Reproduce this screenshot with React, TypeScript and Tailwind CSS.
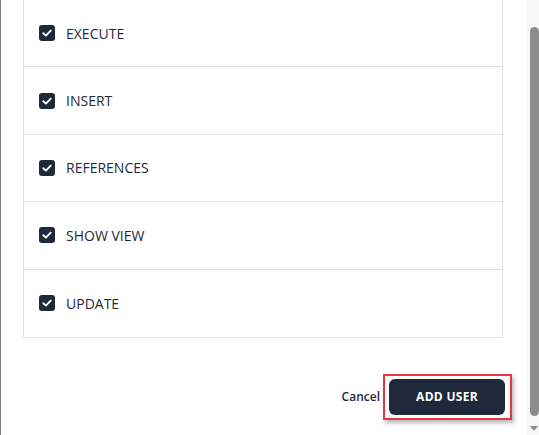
import React from "react";

const items = ["EXECUTE", "INSERT", "REFERENCES", "SHOW VIEW", "UPDATE"];

function Check() {
  return (
    <div className="w-4 h-4 rounded-[3px] bg-[#1e293b] flex items-center justify-center shrink-0">
      <svg width="12" height="12" viewBox="0 0 12 12" fill="none">
        <polyline points="2.3,6.2 4.9,8.6 9.7,3.6" stroke="#ffffff" strokeWidth="1.9" strokeLinecap="round" strokeLinejoin="round" />
      </svg>
    </div>
  );
}

export default function App() {
  return (
    <div className="w-[539px] h-[435px] bg-white flex overflow-hidden" style={{ fontFamily: '"Open Sans", "Noto Sans", sans-serif' }}>
      <div className="w-px h-full bg-[#7a7a7a] shrink-0" />
      <div className="flex-1 flex flex-col">
        <div className="ml-[22px] mr-[23px] border-x border-b border-[#e2e2e2]">
          {items.map((t, i) => (
            <div
              key={t}
              className={`h-[67.4px] flex items-center gap-[11px] pl-[15px] ${i < items.length - 1 ? "border-b border-[#e2e2e2]" : ""}`}
            >
              <Check />
              <span className="text-[14px] text-[#1f2937]">{t}</span>
            </div>
          ))}
        </div>
        <div className="flex items-center justify-end mt-[36px] pr-[14px] gap-[3px]">
          <span className="text-[12px] font-semibold text-[#1e293b]">Cancel</span>
          <div className="border-2 border-[#e8363f] p-[3px] pl-[4px] pr-[5px] shadow-[2px_3px_4px_rgba(0,0,0,0.28)]">
            <button className="w-[116px] h-[36px] rounded-[6px] bg-[#1e293b] text-white text-[12px] font-bold tracking-[0.3px]">
              ADD USER
            </button>
          </div>
        </div>
      </div>
      <div className="w-[13px] h-full bg-[#f8f8f8] flex flex-col items-center shrink-0">
        <div className="mt-[27px] w-[9px] h-[389px] rounded-full bg-[#8c8c8c] ml-[3px]" />
        <div className="mt-[10px] ml-[3px] w-0 h-0 border-l-[4px] border-r-[4px] border-t-[5px] border-l-transparent border-r-transparent border-t-[#8c8c8c]" />
      </div>
    </div>
  );
}
